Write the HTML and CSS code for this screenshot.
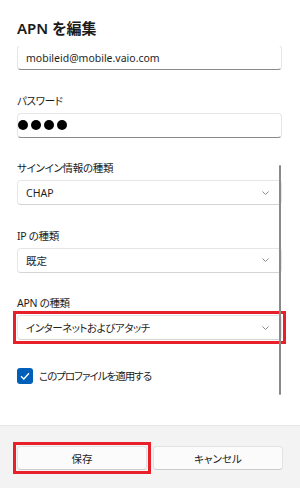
FILE: index.html
```html
<!DOCTYPE html>
<html lang="ja">
<head>
  <meta charset="UTF-8" />
  <title>APN を編集</title>
  <link rel="stylesheet" href="styles.css">
</head>
<body>

<div class="dialog">
  <div class="dialog-head">
    <h1 class="title">APN を編集</h1>
  </div>

  <div class="dialog-body">
    <div class="scroll">
      <div class="field first">
        <div class="box text-box">mobileid@mobile.vaio.com</div>
      </div>

      <div class="field">
        <div class="label">パスワード</div>
        <div class="box text-box pw">
          <span class="dot"></span><span class="dot"></span><span class="dot"></span><span class="dot"></span>
        </div>
      </div>

      <div class="field">
        <div class="label">サインイン情報の種類</div>
        <div class="box select">
          <span>CHAP</span>
          <svg class="chev" width="7" height="4" viewBox="0 0 7 4"><path d="M0.5 0.5 L3.5 3.5 L6.5 0.5" /></svg>
        </div>
      </div>

      <div class="field">
        <div class="label">IP の種類</div>
        <div class="box select">
          <span>既定</span>
          <svg class="chev" width="7" height="4" viewBox="0 0 7 4"><path d="M0.5 0.5 L3.5 3.5 L6.5 0.5" /></svg>
        </div>
      </div>

      <div class="field">
        <div class="label">APN の種類</div>
        <div class="box select mark">
          <span class="kana">インターネットおよびアタッチ</span>
          <svg class="chev" width="7" height="4" viewBox="0 0 7 4"><path d="M0.5 0.5 L3.5 3.5 L6.5 0.5" /></svg>
        </div>
      </div>

      <div class="check-row">
        <span class="check">
          <svg width="10" height="8" viewBox="0 0 10 8"><path d="M1 4.2 L3.8 7 L9 1.2" /></svg>
        </span>
        <span class="kana">このプロファイルを適用する</span>
      </div>
    </div>
    <div class="scrollbar"></div>
  </div>

  <div class="dialog-foot">
    <button class="btn mark">保存</button>
    <button class="btn">キャンセル</button>
  </div>
</div>

</body>
</html>
```

FILE: styles.css
```css
body {
  margin: 0;
  font-family: "Noto Sans", "Noto Sans CJK JP", sans-serif;
  font-feature-settings: "palt";
  color: #1b1b1b;
  background: #fff;
}

.dialog {
  width: 300px;
  height: 488px;
  display: flex;
  flex-direction: column;
  background: #fff;
}

.dialog-head {
  box-sizing: border-box;
  height: 46px;
  padding: 18px 17px 0;
  position: relative;
  z-index: 1;
  background: #fff;
}

.title {
  margin: 0;
  font-size: 15px;
  line-height: 20px;
  font-weight: 600;
}

.dialog-body {
  flex: 1;
  position: relative;
  overflow: hidden;
}

.scroll {
  padding: 0 18px 0 17px;
}

.field {
  margin-top: 22.5px;
}

.field.first {
  margin-top: -1px;
}

.label {
  font-size: 10.5px;
  line-height: 16px;
  margin-bottom: 4px;
  letter-spacing: -0.3px;
}

.box {
  box-sizing: border-box;
  height: 25px;
  display: flex;
  align-items: center;
  padding: 0 12px 0 8px;
  border: 1px solid #e6e6e6;
  border-radius: 4px;
  background: #fff;
  font-size: 10.5px;
  color: #1f1f1f;
}

.kana {
  letter-spacing: -0.5px;
}

.text-box {
  border-bottom-color: #8a8a8a;
}

.select {
  border-bottom-color: #d4d4d4;
}

.pw {
  padding-left: 0;
  gap: 3px;
}

.dot {
  width: 10px;
  height: 10px;
  border-radius: 50%;
  background: #000;
}

.chev {
  margin-left: auto;
}

.chev path {
  fill: none;
  stroke: #8a8a8a;
  stroke-width: 1;
}

.mark {
  position: relative;
}

.mark::after {
  content: "";
  position: absolute;
  top: -5px;
  left: -5px;
  right: -5px;
  bottom: -5px;
  border: 3px solid #e8202a;
}

.check-row {
  margin-top: 27.5px;
  display: flex;
  align-items: center;
  gap: 6px;
  font-size: 10.5px;
}

.check-row .kana {
  letter-spacing: -1px;
}

.check {
  width: 16px;
  height: 16px;
  border-radius: 3px;
  background: #005fb8;
  display: flex;
  align-items: center;
  justify-content: center;
}

.check path {
  fill: none;
  stroke: #fff;
  stroke-width: 1.3;
}

.scrollbar {
  position: absolute;
  left: 279px;
  top: 119px;
  width: 2px;
  height: 230px;
  border-radius: 1px;
  background: #8a8a8a;
}

.dialog-foot {
  box-sizing: border-box;
  height: 63px;
  padding: 20px 17px 0;
  display: flex;
  gap: 6px;
  background: #f3f3f3;
  border-top: 1px solid #e5e5e5;
}

.btn {
  flex: 1;
  height: 24px;
  padding: 0;
  border: 1px solid #e3e3e3;
  border-bottom-color: #cccccc;
  border-radius: 4px;
  background: #fbfbfb;
  font-family: inherit;
  font-feature-settings: "palt";
  font-size: 10.5px;
  color: #1b1b1b;
}
```
